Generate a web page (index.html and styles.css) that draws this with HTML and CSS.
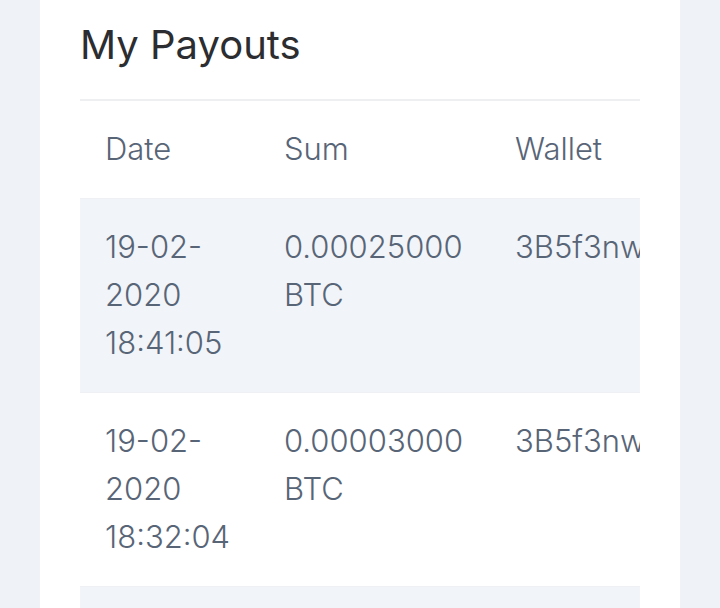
FILE: index.html
```html
<html>
<head>
<link rel="stylesheet" href="styles.css">
</head>
<body>

<div class="card">
  <h2 class="card-title">My Payouts</h2>

  <div class="table-wrap">
    <table class="payouts">
      <thead>
        <tr>
          <th class="col-date">Date</th>
          <th class="col-sum">Sum</th>
          <th class="col-wallet">Wallet</th>
        </tr>
      </thead>
      <tbody>
        <tr>
          <td>19-02-<wbr>2020 18:41:05</td>
          <td>0.00025000 BTC</td>
          <td class="wallet">3B5f3nwQpXkR7vTz9hLmA2cYdE8uJ4sWq</td>
        </tr>
        <tr>
          <td>19-02-<wbr>2020 18:32:04</td>
          <td>0.00003000 BTC</td>
          <td class="wallet">3B5f3nwQpXkR7vTz9hLmA2cYdE8uJ4sWq</td>
        </tr>
        <tr>
          <td>19-02-<wbr>2020 18:20:11</td>
          <td>0.00004000 BTC</td>
          <td class="wallet">3B5f3nwQpXkR7vTz9hLmA2cYdE8uJ4sWq</td>
        </tr>
      </tbody>
    </table>
  </div>
</div>

</body>
</html>
```

FILE: styles.css
```css
body {
  margin: 0;
  background: #eff3f8;
  font-family: Inter, "Open Sans", sans-serif;
}

.card {
  margin: 0 40px;
  padding: 21px 40px 0;
  background: #fff;
  height: 608px;
  overflow: hidden;
  box-sizing: border-box;
}

.card-title {
  margin: 0 0 30px;
  font-size: 40px;
  font-weight: 400;
  line-height: 48px;
  color: #2b2d30;
}

.table-wrap {
  overflow: hidden;
}

.payouts {
  border-collapse: collapse;
  table-layout: fixed;
  width: 700px;
  border-top: 2px solid #eeeff1;
}

.payouts th,
.payouts td {
  padding: 24px 25px 25px;
  text-align: left;
  vertical-align: top;
  font-size: 31px;
  font-weight: 300;
  line-height: 48px;
  color: #586577;
}

.col-date {
  width: 129px;
}

.col-sum {
  width: 181px;
}

.payouts tbody tr:nth-child(odd) {
  background: #f1f4f8;
}

.payouts tbody tr {
  border-top: 1px solid #eef0f3;
}

.wallet {
  white-space: nowrap;
  overflow: hidden;
}
```
